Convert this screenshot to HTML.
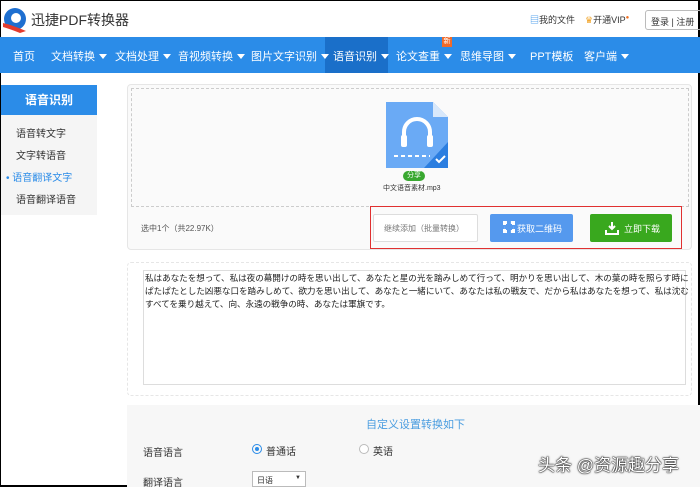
<!DOCTYPE html>
<html><head><meta charset="utf-8"><style>
*{box-sizing:border-box;margin:0;padding:0}
body{width:700px;height:487px;overflow:hidden;background:#fff;font-family:"Liberation Sans","Noto Sans CJK SC",sans-serif;position:relative;font-size:10px;color:#333}
.a{position:absolute}
.nav{top:37px;left:0;width:700px;height:36px;background:#2b8ce8}
.nav span{position:absolute;top:11px;color:#fff;font-size:11px;white-space:nowrap}
.tri{display:inline-block;border-left:4px solid transparent;border-right:4px solid transparent;border-top:5px solid #fff;margin-left:4px;vertical-align:1px}
</style></head><body>
<div class="a" style="left:0;top:0;width:700px;height:1px;background:#000"></div>
<div class="a" style="right:0;top:0;width:2px;height:487px;background:#000"></div>
<div class="a" style="left:0;bottom:0;width:700px;height:2px;background:#000"></div>
<div class="a" style="left:0;top:0;width:1px;height:487px;background:#000"></div>
<svg class="a" style="left:2px;top:7px" width="26" height="26" viewBox="0 0 26 26"><circle cx="13" cy="12" r="11" fill="#1e6fd0"/><circle cx="14" cy="11" r="5" fill="#fff"/><path d="M1 16 Q10 18 24 24 L18 26 Q8 22 1 20Z" fill="#e23b2e"/></svg>
<div class="a" style="left:31px;top:10px;font-size:14px;color:#333">迅捷PDF转换器</div>
<div class="a" style="left:530px;top:13px;font-size:9px;color:#333"><span style="color:#2b8ce8">▤</span>我的文件</div>
<div class="a" style="left:585px;top:13px;font-size:9px;color:#333"><span style="color:#f0a020">♛</span>开通VIP<sup style="color:#f07020;font-size:6px">●</sup></div>
<div class="a" style="left:645px;top:10px;width:57px;height:20px;border:1px solid #bbb;border-radius:3px;font-size:9px;padding:4px 0 0 5px">登录 | 注册</div>
<div class="a nav">
<div class="a" style="left:325px;top:0;width:63px;height:36px;background:#1a6fc9"></div>
<span style="left:13px">首页</span>
<span style="left:51px">文档转换<i class="tri"></i></span>
<span style="left:115px">文档处理<i class="tri"></i></span>
<span style="left:178px">音视频转换<i class="tri"></i></span>
<span style="left:251px">图片文字识别<i class="tri"></i></span>
<span style="left:333px">语音识别<i class="tri"></i></span>
<span style="left:396px">论文查重<i class="tri"></i></span>
<span style="left:460px">思维导图<i class="tri"></i></span>
<span style="left:530px">PPT模板</span>
<span style="left:584px">客户端<i class="tri"></i></span>
</div>
<div class="a" style="left:442px;top:37px;width:10px;height:10px;background:#f06a2a;color:#fff;font-size:7px;text-align:center;line-height:10px">新</div>
<div class="a" style="left:1px;top:85px;width:96px;height:130px;background:#f5f5f5"></div>
<div class="a" style="left:1px;top:85px;width:96px;height:30px;background:#2b8ce8;color:#fff;font-size:12px;font-weight:bold;text-align:center;line-height:30px">语音识别</div>
<div class="a" style="left:16px;top:125px;font-size:10px">语音转文字</div>
<div class="a" style="left:16px;top:147px;font-size:10px">文字转语音</div>
<div class="a" style="left:6px;top:169px;font-size:10px;color:#2b8ce8">• 语音翻译文字</div>
<div class="a" style="left:16px;top:191px;font-size:10px">语音翻译语音</div>
<div class="a" style="left:127px;top:84px;width:565px;height:166px;border:1px solid #e6e6e6;border-radius:4px;background:#fafafa"></div>
<div class="a" style="left:131px;top:88px;width:558px;height:119px;border:1px dashed #ccc"></div>
<svg class="a" style="left:386px;top:102px" width="62" height="66" viewBox="0 0 62 66"><path d="M0 0H47L62 15V66H0Z" fill="#6aaaf5"/><path d="M47 0V15H62Z" fill="#d8e8fb"/><path d="M18 40V30a13 13 0 0 1 26 0V40" stroke="#fff" stroke-width="4" fill="none"/><rect x="15" y="33" width="6" height="12" rx="2" fill="#fff"/><rect x="41" y="33" width="6" height="12" rx="2" fill="#fff"/><path d="M8 54H44" stroke="#fff" stroke-width="2" stroke-dasharray="4 3"/><path d="M62 40V66H38Z" fill="#2b7ee0"/><path d="M50 57l3 3 6-6" stroke="#fff" stroke-width="2" fill="none"/></svg>
<div class="a" style="left:403px;top:171px;width:22px;height:10px;background:#39a830;border-radius:5px;color:#fff;font-size:7px;text-align:center;line-height:10px">分享</div>
<div class="a" style="left:383px;top:183px;font-size:7px;color:#333">中文语音素材.mp3</div>
<div class="a" style="left:141px;top:223px;font-size:8px;color:#555">选中1个（共22.97K）</div>
<div class="a" style="left:370px;top:206px;width:312px;height:43px;border:1px solid #e03030"></div>
<div class="a" style="left:373px;top:214px;width:105px;height:28px;border:1px solid #ddd;background:#fff;border-radius:2px;font-size:8px;color:#777;padding:8px 0 0 10px">继续添加（批量转换）</div>
<div class="a" style="left:490px;top:214px;width:83px;height:28px;background:#5599ee;border-radius:2px;color:#fff;font-size:9px;padding:8px 0 0 27px">获取二维码</div>
<div class="a" style="left:503px;top:221px;width:12px;height:12px;border:3px dotted #fff"></div>
<div class="a" style="left:590px;top:214px;width:82px;height:28px;background:#39a81e;border-radius:2px;color:#fff;font-size:9px;padding:8px 0 0 34px">立即下载</div>
<svg class="a" style="left:605px;top:221px" width="14" height="14" viewBox="0 0 14 14"><path d="M7 1V8M4 5l3 3 3-3" stroke="#fff" stroke-width="2" fill="none"/><path d="M1 9V13H13V9" stroke="#fff" stroke-width="2" fill="none"/></svg>
<div class="a" style="left:127px;top:262px;width:565px;height:134px;border:1px dashed #e6e6e6;border-radius:4px"></div>
<div class="a" style="left:143px;top:270px;width:543px;height:115px;border:1px solid #ddd;padding:1px 1px;font-size:8.6px;line-height:13px;color:#222;font-family:'Liberation Sans','Noto Sans CJK JP',sans-serif;white-space:nowrap;letter-spacing:-0.05px">私はあなたを想って、私は夜の幕開けの時を思い出して、あなたと星の光を踏みしめて行って、明かりを思い出して、木の葉の時を照らす時に<br>ぱたぱたとした凶悪な口を踏みしめて、欲力を思い出して、あなたと一緒にいて、あなたは私の戦友で、だから私はあなたを想って、私は沈む<br>すべてを乗り越えて、向、永遠の戦争の時、あなたは軍旗です。</div>
<div class="a" style="left:127px;top:405px;width:573px;height:82px;background:#f7f7f7"></div>
<div class="a" style="left:366px;top:416px;font-size:11px;color:#4a9de0">自定义设置转换如下</div>
<div class="a" style="left:143px;top:444px;font-size:10px;color:#333">语音语言</div>
<div class="a" style="left:252px;top:444px;width:10px;height:10px;border:1px solid #2b8ce8;border-radius:50%"><div style="margin:2px;width:4px;height:4px;background:#2b8ce8;border-radius:50%"></div></div>
<div class="a" style="left:266px;top:443px;font-size:10px">普通话</div>
<div class="a" style="left:359px;top:444px;width:10px;height:10px;border:1px solid #bbb;border-radius:50%;background:#fff"></div>
<div class="a" style="left:373px;top:443px;font-size:10px">英语</div>
<div class="a" style="left:143px;top:474px;font-size:10px;color:#333">翻译语言</div>
<div class="a" style="left:252px;top:471px;width:54px;height:16px;border:1px solid #bbb;background:#fff;font-size:8px;padding:3px 0 0 4px">日语<span style="position:absolute;right:4px;font-size:6px">▼</span></div>
<div class="a" style="left:538px;top:451px;font-size:17px;color:#fff;text-shadow:0 0 2px #222,0 0 1px #000,0 0 1px #000">头条 @资源趣分享</div>
</body></html>
